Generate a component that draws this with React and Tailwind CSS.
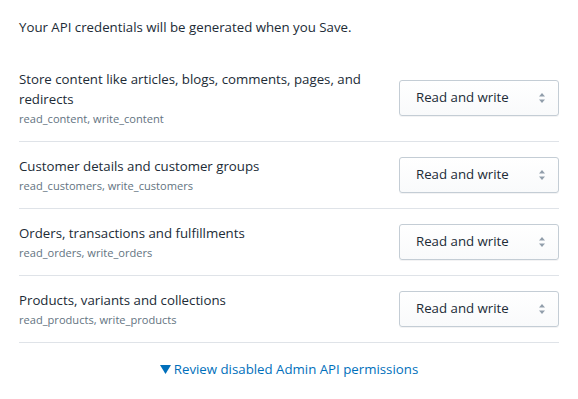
const ROWS = [
  {
    title: "Store content like articles, blogs, comments, pages, and redirects",
    scopes: "read_content, write_content",
  },
  {
    title: "Customer details and customer groups",
    scopes: "read_customers, write_customers",
  },
  {
    title: "Orders, transactions and fulfillments",
    scopes: "read_orders, write_orders",
  },
  {
    title: "Products, variants and collections",
    scopes: "read_products, write_products",
  },
];

function SelectBox() {
  return (
    <div className="w-[160px] h-[36px] shrink-0 rounded-[3px] border border-[#c4cdd5] bg-gradient-to-b from-white to-[#f9fafb] shadow-[0_1px_0_rgba(22,29,37,0.05)] flex items-center pl-[16px] pr-[12px]">
      <span className="flex-1 text-[13.25px] text-[#212b36]">Read and write</span>
      <svg width="8" height="12" viewBox="0 0 8 12" className="text-[#919eab]">
        <path d="M4 1 L7 4.5 H1 Z" fill="currentColor" />
        <path d="M4 11 L7 7.5 H1 Z" fill="currentColor" />
      </svg>
    </div>
  );
}

export default function App() {
  return (
    <div
      className="w-[578px] h-[399px] bg-white px-[19px] pt-[17px] text-[#212b36]"
      style={{ fontFamily: '"Open Sans", "Noto Sans", sans-serif' }}
    >
      <p className="text-[13.25px] leading-5">
        Your API credentials will be generated when you Save.
      </p>

      <div className="mt-[18px]">
        {ROWS.map((row) => (
          <div
            key={row.scopes}
            className="flex items-center gap-4 min-h-[67px] py-[14px] border-b border-[#dfe3e8]"
          >
            <div className="flex-1">
              <p className="text-[13.25px] leading-5">{row.title}</p>
              <p className="mt-[2px] text-[11.1px] leading-4 text-[#637381]">{row.scopes}</p>
            </div>
            <SelectBox />
          </div>
        ))}
      </div>

      <div className="pt-[16px] flex justify-center items-center gap-[3px] text-[13.25px] leading-5 text-[#006fbb]">
        <svg width="11" height="9" viewBox="0 0 11 9">
          <path d="M0 0 H11 L5.5 9 Z" fill="currentColor" />
        </svg>
        <span>Review disabled Admin API permissions</span>
      </div>
    </div>
  );
}
